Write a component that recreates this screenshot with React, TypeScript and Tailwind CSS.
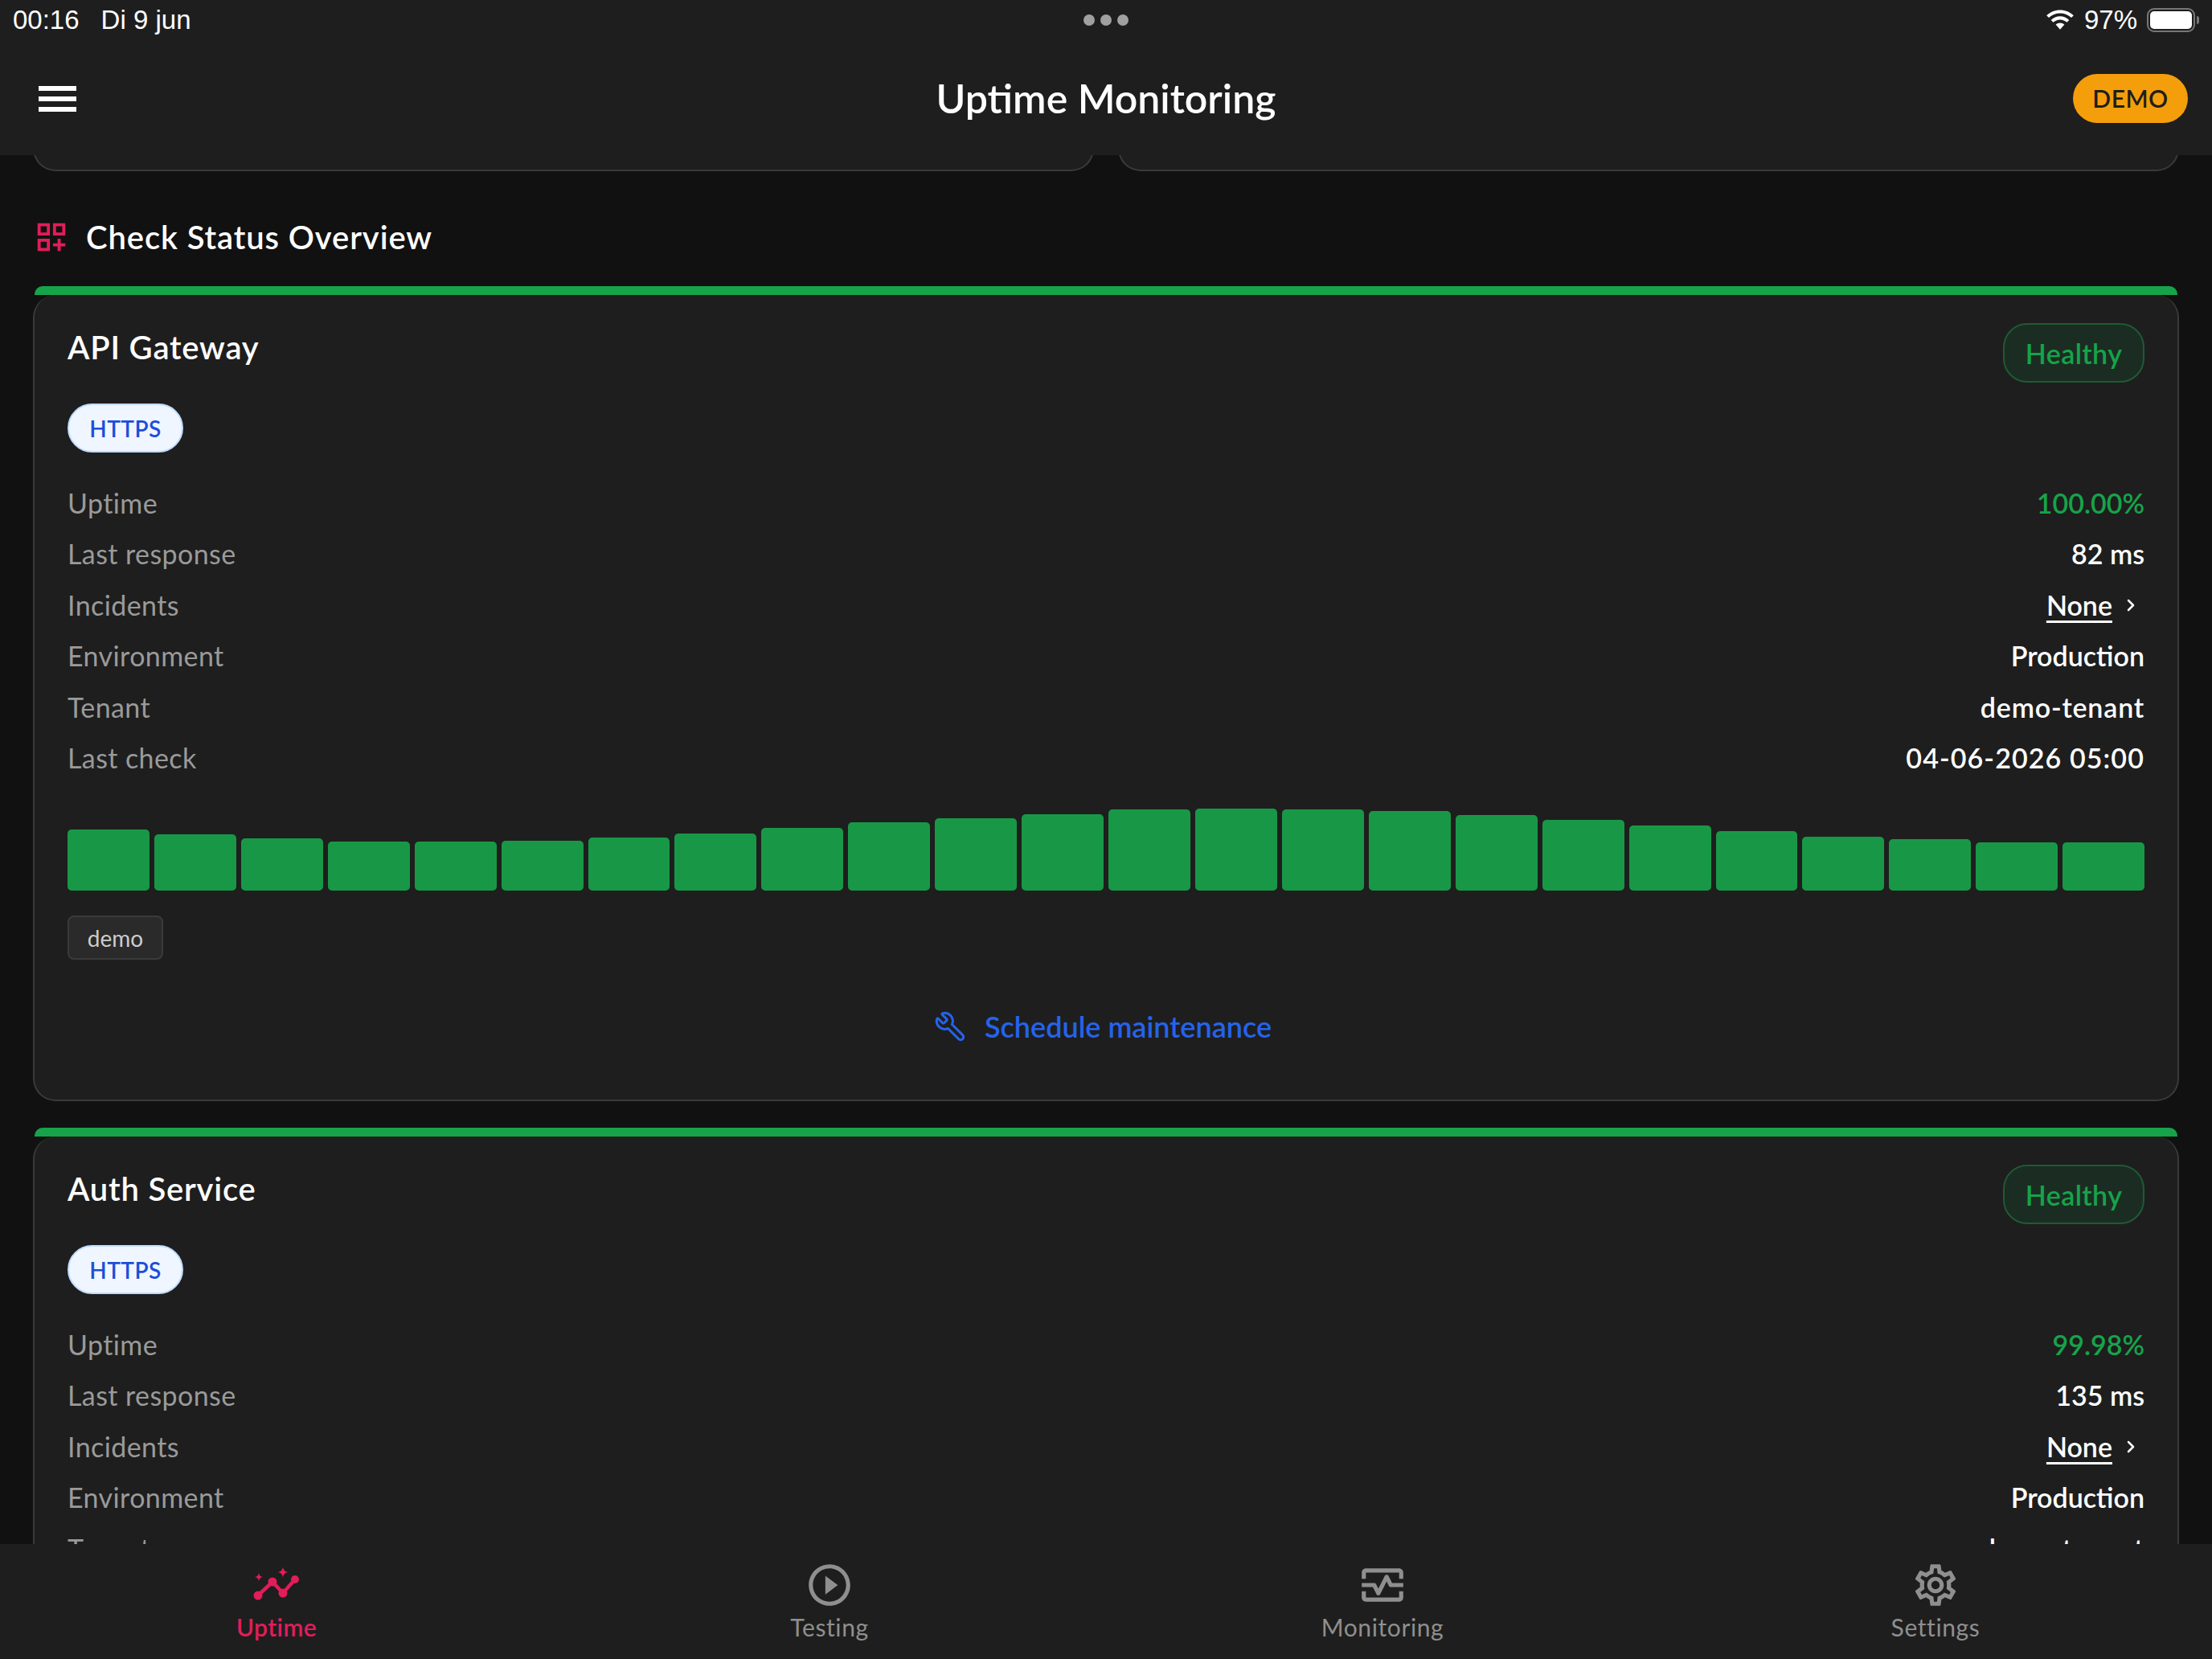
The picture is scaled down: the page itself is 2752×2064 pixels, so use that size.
import { ChevronRight, Wrench } from 'lucide-react'
import {
  MdOutlineDashboardCustomize,
  MdOutlineMonitorHeart,
  MdOutlineSettings,
  MdPlayCircleOutline
} from 'react-icons/md'

const barHeights = [76, 70, 65, 61, 61, 62, 66, 71, 78, 85, 90, 95, 101, 102, 101, 99, 94, 88, 81, 74, 67, 64, 60, 60]

const checks = [
  { name: 'API Gateway', uptime: '100.00%', response: '82 ms' },
  { name: 'Auth Service', uptime: '99.98%', response: '135 ms' }
]

function UptimeIcon({ className }: { className?: string }) {
  return (
    <svg viewBox="0 0 62 62" className={className} fill="currentColor">
      <path d="M8 44 26 27 39 41 54 24" fill="none" stroke="currentColor" strokeWidth="4.500" />
      <circle cx="8" cy="44" r="5.500" />
      <circle cx="26" cy="27" r="5.500" />
      <circle cx="39" cy="41" r="5.500" />
      <circle cx="54" cy="24" r="5" />
      <path d="M39 8.500c.8 4 2.500 5.700 6.500 6.500-4 .8-5.700 2.500-6.500 6.500-.8-4-2.500-5.700-6.500-6.500 4-.8 5.700-2.500 6.500-6.500z" />
      <path d="M9 16c.5 3 2 4.500 5 5-3 .5-4.500 2-5 5-.5-3-2-4.500-5-5 3-.5 4.500-2 5-5z" />
    </svg>
  )
}

const navItems = [
  { label: 'Uptime', Icon: UptimeIcon, active: true },
  { label: 'Testing', Icon: MdPlayCircleOutline, active: false },
  { label: 'Monitoring', Icon: MdOutlineMonitorHeart, active: false },
  { label: 'Settings', Icon: MdOutlineSettings, active: false }
]

function Row({ label, children }: { label: string; children: React.ReactNode }) {
  return (
    <div className="flex h-[63.5px] items-center justify-between text-[34px] leading-none">
      <span className="tracking-[0.4px] text-[#9a9a9a]">{label}</span>
      {children}
    </div>
  )
}

function CheckCard({ name, uptime, response }: { name: string; uptime: string; response: string }) {
  return (
    <div className="flex flex-col">
      <div className="mx-[2px] h-[11px] rounded-t-[10px] bg-[#16a34a]" />
      <div className="rounded-[28px] border-x-2 border-b-2 border-[#3a3a3a] bg-[#1e1e1e] px-[41px] pb-[61px] pt-[35px]">
        {/* Header */}
        <div className="flex items-start justify-between">
          <h2 className="text-[40px] font-semibold leading-[60px] tracking-[0.8px] text-white">{name}</h2>
          <span className="flex h-[74px] w-[176px] items-center justify-center rounded-[30px] border-2 border-[#1f5a35] bg-[#1b2d22] text-[34px] font-semibold tracking-[0.4px] text-[#16a34a]">
            Healthy
          </span>
        </div>
        <span className="mt-[26px] flex h-[61px] w-[144px] items-center justify-center rounded-full border-2 border-[#bfdbfe] bg-[#eff6ff] text-[28px] font-semibold tracking-[0.5px] text-[#1d4ed8]">
          HTTPS
        </span>

        {/* Details */}
        <div className="mt-[31px] flex flex-col">
          <Row label="Uptime">
            <span className="font-semibold text-[#16a34a]">{uptime}</span>
          </Row>
          <Row label="Last response">
            <span className="font-semibold text-white">{response}</span>
          </Row>
          <Row label="Incidents">
            <span className="flex items-center gap-[11px] pr-[5px] font-semibold text-white">
              <span className="underline underline-offset-[6px]">None</span>
              <ChevronRight className="h-[24px] w-[24px]" strokeWidth={2.500} />
            </span>
          </Row>
          <Row label="Environment">
            <span className="font-semibold text-white">Production</span>
          </Row>
          <Row label="Tenant">
            <span className="font-semibold tracking-[0.8px] text-white">demo-tenant</span>
          </Row>
          <Row label="Last check">
            <span className="font-semibold tracking-[1.1px] text-white">04-06-2026 05:00</span>
          </Row>
        </div>

        {/* History bars */}
        <div className="mt-[31px] flex h-[102px] items-end gap-[6px]">
          {barHeights.map((h, i) => (
            <div key={i} className="flex-1 rounded-[5px] bg-[#189846]" style={{ height: h }} />
          ))}
        </div>

        <span className="mt-[31px] flex h-[55px] w-[119px] items-center justify-center rounded-[8px] border-2 border-[#3a3a3a] bg-[#2a2a2a] text-[28px] text-[#cccccc]">
          demo
        </span>

        <div className="mt-[53px] flex h-[60px] items-center justify-center gap-[23px] pr-[8px] text-[#2563eb]">
          <Wrench className="h-[40px] w-[40px] -scale-x-100" strokeWidth={1.8} />
          <span className="text-[36px] font-semibold">Schedule maintenance</span>
        </div>
      </div>
    </div>
  )
}

export default function App() {
  return (
    <div className="flex h-[2064px] w-[2752px] flex-col overflow-hidden bg-[#111111] font-['Lato',sans-serif]">
      {/* Status bar + title bar */}
      <header className="flex h-[193px] shrink-0 flex-col bg-[#1e1e1e]">
        <div className="flex h-[50px] items-center justify-between pl-[16px] pr-[16px] font-['Liberation_Sans',sans-serif] text-[33px] text-white">
          <div className="flex w-[400px] gap-[27px]">
            <span>00:16</span>
            <span>Di 9 jun</span>
          </div>
          <div className="flex gap-[7px]">
            <span className="h-[14px] w-[14px] rounded-full bg-[#a0a0a0]" />
            <span className="h-[14px] w-[14px] rounded-full bg-[#a0a0a0]" />
            <span className="h-[14px] w-[14px] rounded-full bg-[#a0a0a0]" />
          </div>
          <div className="flex w-[400px] items-center justify-end gap-[12px]">
            <svg viewBox="2 0 32 26" className="h-[28px] w-[36px]" fill="white">
              <path d="M18 5.2c5 0 9.6 1.9 13 5.1l2.6-2.7C29.500 3.700 24 1.300 18 1.300S6.500 3.700 2.400 7.600L5 10.300c3.400-3.200 8-5.100 13-5.100z" />
              <path d="M18 12.500c3 0 5.800 1.200 7.900 3.100l2.600-2.700c-2.800-2.600-6.500-4.200-10.500-4.200s-7.700 1.600-10.500 4.200l2.600 2.700c2.100-1.900 4.900-3.100 7.900-3.100z" />
              <path d="M18 16.300c-1.900 0-3.700.7-5 1.900l5 5.800 5-5.800c-1.300-1.200-3.100-1.900-5-1.900z" />
            </svg>
            <span>97%</span>
            <span className="flex items-center gap-[2px]">
              <span className="flex h-[30px] w-[60px] rounded-[9px] border-2 border-[#777777] p-[2px]">
                <span className="flex-1 rounded-[5px] bg-white" />
              </span>
              <span className="h-[10px] w-[3px] rounded-r-full bg-[#777777]" />
            </span>
          </div>
        </div>
        <div className="grid flex-1 grid-cols-3 items-center px-[30px] pt-[2px]">
          <div className="ml-[18px] flex w-[47px] flex-col gap-[7px]">
            <span className="h-[6px] bg-white" />
            <span className="h-[6px] bg-white" />
            <span className="h-[6px] bg-white" />
          </div>
          <h1 className="whitespace-nowrap text-center text-[50px] font-semibold text-white">Uptime Monitoring</h1>
          <span className="flex h-[61px] w-[143px] items-center justify-center justify-self-end rounded-full bg-[#f59e0b] text-[30px] font-semibold tracking-[0.5px] text-[#1e1e1e]">
            DEMO
          </span>
        </div>
      </header>

      {/* Scrolled content */}
      <main className="min-h-0 flex-1 overflow-hidden px-[41px]">
        <div className="-mt-[20px] grid grid-cols-2 gap-[30px]">
          <div className="h-[40px] rounded-b-[28px] border-x-2 border-b-2 border-[#3a3a3a] bg-[#1e1e1e]" />
          <div className="h-[40px] rounded-b-[28px] border-x-2 border-b-2 border-[#3a3a3a] bg-[#1e1e1e]" />
        </div>

        <div className="mt-[52px] flex h-[60px] items-center gap-[20px]">
          <MdOutlineDashboardCustomize className="h-[46px] w-[46px] text-[#e11d5a]" />
          <h2 className="text-[40px] font-semibold tracking-[0.9px] text-white">Check Status Overview</h2>
        </div>

        <div className="mt-[31px] flex flex-col gap-[33px]">
          {checks.map(check => (
            <CheckCard key={check.name} {...check} />
          ))}
        </div>
      </main>

      {/* Bottom nav */}
      <nav className="grid h-[143px] shrink-0 grid-cols-4 bg-[#1e1e1e]">
        {navItems.map(({ label, Icon, active }) => (
          <div
            key={label}
            className={`flex flex-col items-center pt-[20px] ${active ? 'text-[#e11d5a]' : 'text-[#8f8f8f]'}`}
          >
            <Icon className="h-[62px] w-[62px]" />
            <span className={`mt-[1px] text-[30px] leading-[40px] ${active ? 'font-semibold tracking-[0.4px]' : 'tracking-[0.6px]'}`}>
              {label}
            </span>
          </div>
        ))}
      </nav>
    </div>
  )
}
